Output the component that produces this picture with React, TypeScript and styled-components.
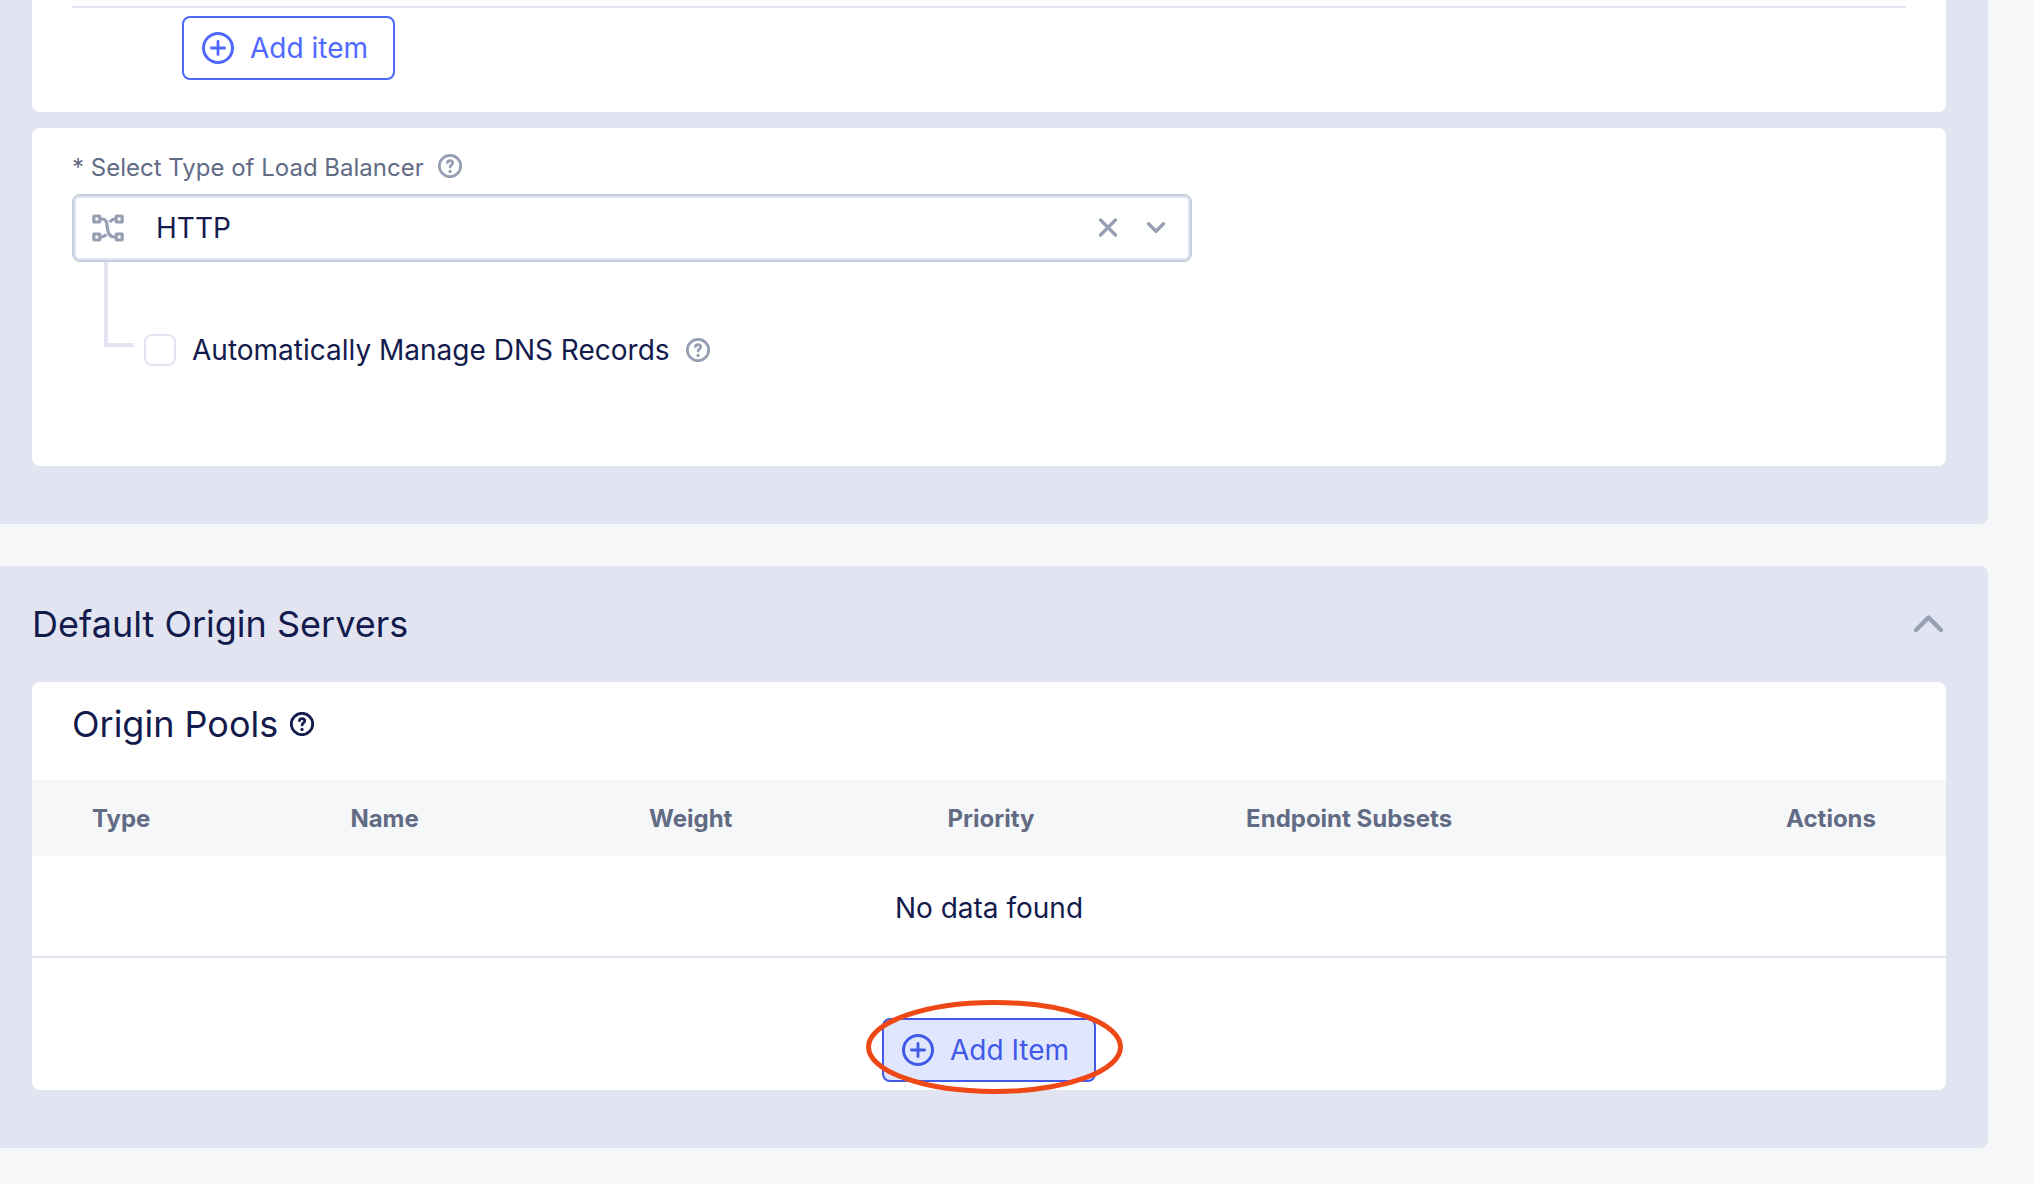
import React, { useState } from "react";
import styled, { createGlobalStyle, css } from "styled-components";

const color = {
  page: "#f5f7f9",
  panel: "#e2e5f1",
  card: "#ffffff",
  ink: "#131b4d",
  muted: "#626b84",
  icon: "#979fb2",
  outline: "#c8cde0",
  blue: "#4f68ff",
  blueActive: "#4059e6",
  blueTint: "#e1e6ff",
  marker: "#ee4816",
};

const GlobalStyle = createGlobalStyle`
  *, *::before, *::after { box-sizing: border-box; }
  body {
    margin: 0;
    background: ${color.page};
    color: ${color.ink};
    font-family: Inter, "Liberation Sans", sans-serif;
    font-size: 28px;
    line-height: 40px;
  }
`;

const Page = styled.main`
  display: flex;
  flex-direction: column;
  gap: 42px;
  padding: 0 46px 36px 0;
`;

const Section = styled.section<{ $continued?: boolean }>`
  display: flex;
  flex-direction: column;
  gap: 16px;
  padding: 0 42px 58px 32px;
  background: ${color.panel};
  border-radius: ${(p) => (p.$continued ? "0 0 8px 0" : "0 8px 8px 0")};
`;

const SectionHeader = styled.header`
  display: flex;
  align-items: center;
  justify-content: space-between;
  padding: 36px 0 20px;
`;

const Heading = styled.h2`
  margin: 0;
  font-size: 36px;
  line-height: 44px;
  font-weight: 400;
`;

const Card = styled.div<{ $continued?: boolean }>`
  background: ${color.card};
  border-radius: ${(p) => (p.$continued ? "0 0 8px 8px" : "8px")};
`;

const ListEnd = styled.div`
  margin: 0 40px;
  padding: 6px 0 32px;
`;

const Rule = styled.hr`
  margin: 0 0 8px;
  border: 0;
  height: 2px;
  background: ${color.panel};
`;

const ListAction = styled.div`
  display: flex;
  padding-left: 110px;
`;

const OutlineButton = styled.button<{ $active?: boolean }>`
  display: inline-flex;
  align-items: center;
  gap: 16px;
  height: 64px;
  padding: 0 25px 0 18px;
  border: 2px solid ${color.blue};
  border-radius: 8px;
  background: transparent;
  color: ${color.blue};
  font: inherit;
  cursor: pointer;
  ${(p) =>
    p.$active &&
    css`
      border-color: ${color.blueActive};
      background: ${color.blueTint};
      color: ${color.blueActive};
    `}
`;

const Form = styled.form`
  padding: 24px 40px 96px;
`;

const LabelRow = styled.div`
  display: flex;
  align-items: flex-start;
  gap: 14px;
  margin-bottom: 10px;
  font-size: 24px;
  line-height: 32px;
  color: ${color.muted};
`;

const SelectBox = styled.div`
  display: flex;
  align-items: center;
  max-width: 1120px;
  height: 68px;
  padding: 0 22px 0 18px;
  border: 2px solid ${color.outline};
  border-radius: 8px;
  box-shadow: inset 0 0 0 2px ${color.panel};
`;

const TypeSelect = styled.select`
  flex: 1;
  min-width: 0;
  height: 56px;
  margin: 0 16px 0 32px;
  padding: 0;
  border: 0;
  outline: 0;
  appearance: none;
  background: transparent;
  color: inherit;
  font: inherit;
`;

const IconButton = styled.button`
  display: inline-flex;
  align-items: center;
  justify-content: center;
  min-height: 28px;
  padding: 0;
  border: 0;
  background: transparent;
  color: ${(p) => p.color ?? color.icon};
  cursor: pointer;
`;

const SelectActions = styled.div`
  display: flex;
  align-items: center;
  gap: 24px;
`;

const Nested = styled.div`
  display: flex;
  align-items: flex-start;
  gap: 10px;
  padding-left: 32px;
`;

const Branch = styled.span`
  width: 30px;
  height: 85px;
  border: solid ${color.panel};
  border-width: 0 0 4px 4px;
`;

const CheckRow = styled.div`
  display: flex;
  align-items: center;
  gap: 16px;
  padding-top: 68px;
`;

const Checkbox = styled.input`
  appearance: none;
  width: 32px;
  height: 32px;
  margin: 0;
  border: 2px solid ${color.panel};
  border-radius: 8px;
  background: ${color.card};
  &:checked {
    background: ${color.blue};
  }
`;

const PoolsHeader = styled.div`
  display: flex;
  align-items: center;
  gap: 12px;
  padding: 20px 40px 34px;
`;

const PoolsTable = styled.table`
  width: 100%;
  table-layout: fixed;
  border-collapse: separate;
  border-spacing: 0;
`;

const HeadCell = styled.th<{ $width: string; $end?: boolean }>`
  width: ${(p) => p.$width};
  height: 76px;
  padding: ${(p) => (p.$end ? "2px 70px 0 0" : "2px 0 0 60px")};
  background: ${color.page};
  color: ${color.muted};
  font-size: 24px;
  line-height: 32px;
  font-weight: 700;
  text-align: ${(p) => (p.$end ? "right" : "left")};
  white-space: nowrap;
`;

const EmptyCell = styled.td`
  padding: 32px 0 28px;
  border-bottom: 2px solid ${color.panel};
  text-align: center;
`;

const PoolsFooter = styled.div`
  display: flex;
  justify-content: center;
  padding: 60px 0 8px;
`;

const Marked = styled.div`
  position: relative;
  display: flex;
`;

const Marker = styled.svg`
  position: absolute;
  left: -16px;
  top: -18px;
  overflow: visible;
  pointer-events: none;
`;

const PlusIcon = () => (
  <svg width="32" height="32" viewBox="0 0 32 32" fill="none" stroke="currentColor" strokeLinecap="round" aria-hidden="true">
    <circle cx="16" cy="16" r="14.5" strokeWidth="3" />
    <path d="M16 9.400v13.200M9.400 16h13.200" strokeWidth="2.800" />
  </svg>
);

const HelpIcon = () => (
  <svg width="24" height="24" viewBox="0 0 24 24" fill="none" stroke="currentColor" strokeLinecap="round" strokeLinejoin="round" aria-hidden="true">
    <circle cx="12" cy="12" r="10.700" strokeWidth="2.800" />
    <path d="M9.400 8.700c.2-1.300 1.300-2 2.700-2 1.500 0 2.600.8 2.600 2.200 0 1.900-2.600 2.100-2.600 4.200" strokeWidth="2.700" />
    <circle cx="12" cy="17.400" r="1.600" fill="currentColor" stroke="none" />
  </svg>
);

const NetworkIcon = () => (
  <svg width="32" height="28" viewBox="0 0 32 28" fill="none" stroke={color.icon} strokeWidth="3.200" aria-hidden="true">
    <rect x="1.800" y="2" width="6" height="6" rx=".4" />
    <rect x="24.200" y="2" width="6" height="6" rx=".4" />
    <rect x="1.800" y="20" width="6" height="6" rx=".4" />
    <rect x="24.200" y="20" width="6" height="6" rx=".4" />
    <path d="M8 5h2c4.200 0 4.800 3 5.400 9s2.200 9 6.600 9h2" />
    <path d="M24 5c-3.200 0-5 1-6.200 3.200M8 23c3.200 0 5-.8 6.200-2.800" />
  </svg>
);

const ClearIcon = () => (
  <svg width="24" height="24" viewBox="0 0 24 24" fill="none" stroke="currentColor" strokeWidth="3.400" strokeLinecap="round" aria-hidden="true">
    <path d="M4.500 4l15 15M19.500 4l-15 15" />
  </svg>
);

const ChevronDown = () => (
  <svg width="24" height="24" viewBox="0 0 24 24" fill="none" stroke={color.icon} strokeWidth="3.400" strokeLinecap="round" strokeLinejoin="round" aria-hidden="true">
    <path d="M4.500 7.700L12 15.200l7.500-7.500" />
  </svg>
);

const ChevronUp = () => (
  <svg width="36" height="36" viewBox="0 0 36 36" fill="none" stroke="currentColor" strokeWidth="4.400" strokeLinecap="round" strokeLinejoin="round" aria-hidden="true">
    <path d="M6 24L18.500 11.500 31 24" />
  </svg>
);

const columns = [
  { label: "Type", width: "13.5%" },
  { label: "Name", width: "15.6%" },
  { label: "Weight", width: "15.6%" },
  { label: "Priority", width: "15.6%" },
  { label: "Endpoint Subsets", width: "15.6%" },
  { label: "Actions", width: "24.1%", end: true },
];

export default function App() {
  const [type, setType] = useState("HTTP");
  const [manageDns, setManageDns] = useState(false);

  return (
    <>
      <GlobalStyle />
      <Page>
        <Section $continued>
          <Card $continued>
            <ListEnd>
              <Rule />
              <ListAction>
                <OutlineButton type="button">
                  <PlusIcon />
                  Add item
                </OutlineButton>
              </ListAction>
            </ListEnd>
          </Card>
          <Card>
            <Form>
              <LabelRow>
                <label htmlFor="lb-type">* Select Type of Load Balancer</label>
                <IconButton type="button" aria-label="Help: type of load balancer">
                  <HelpIcon />
                </IconButton>
              </LabelRow>
              <SelectBox>
                <NetworkIcon />
                <TypeSelect id="lb-type" value={type} onChange={(e) => setType(e.target.value)}>
                  <option value="" hidden />
                  <option>HTTP</option>
                </TypeSelect>
                <SelectActions>
                  <IconButton type="button" aria-label="Clear" onClick={() => setType("")}>
                    <ClearIcon />
                  </IconButton>
                  <ChevronDown />
                </SelectActions>
              </SelectBox>
              <Nested>
                <Branch />
                <CheckRow>
                  <Checkbox
                    id="manage-dns"
                    type="checkbox"
                    checked={manageDns}
                    onChange={(e) => setManageDns(e.target.checked)}
                  />
                  <label htmlFor="manage-dns">Automatically Manage DNS Records</label>
                  <IconButton type="button" aria-label="Help: DNS records">
                    <HelpIcon />
                  </IconButton>
                </CheckRow>
              </Nested>
            </Form>
          </Card>
        </Section>

        <Section>
          <SectionHeader>
            <Heading>Default Origin Servers</Heading>
            <IconButton type="button" aria-label="Collapse section">
              <ChevronUp />
            </IconButton>
          </SectionHeader>
          <Card>
            <PoolsHeader>
              <Heading as="h3">Origin Pools</Heading>
              <IconButton type="button" color={color.ink} aria-label="Help: origin pools">
                <HelpIcon />
              </IconButton>
            </PoolsHeader>
            <PoolsTable>
              <thead>
                <tr>
                  {columns.map((c) => (
                    <HeadCell key={c.label} scope="col" $width={c.width} $end={c.end}>
                      {c.label}
                    </HeadCell>
                  ))}
                </tr>
              </thead>
              <tbody>
                <tr>
                  <EmptyCell colSpan={columns.length}>No data found</EmptyCell>
                </tr>
              </tbody>
            </PoolsTable>
            <PoolsFooter>
              <Marked>
                <OutlineButton type="button" $active>
                  <PlusIcon />
                  Add Item
                </OutlineButton>
                <Marker width="257" height="94" viewBox="0 0 257 94" fill="none" aria-hidden="true">
                  <ellipse cx="128.500" cy="47" rx="126" ry="44.500" stroke={color.marker} strokeWidth="5" />
                </Marker>
              </Marked>
            </PoolsFooter>
          </Card>
        </Section>
      </Page>
    </>
  );
}
